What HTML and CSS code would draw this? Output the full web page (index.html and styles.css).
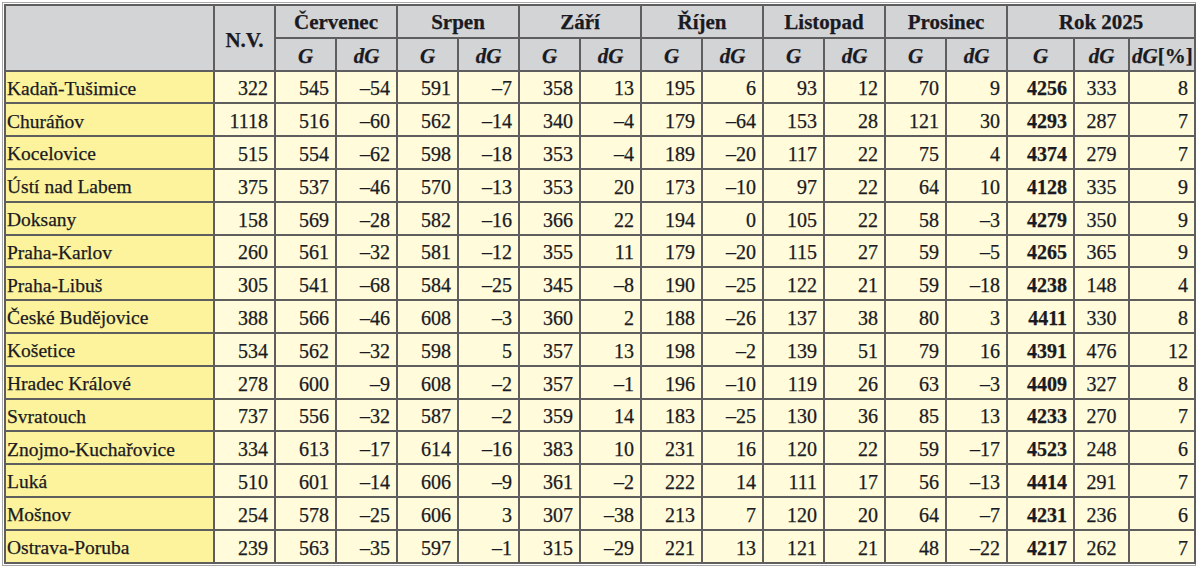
FILE: index.html
```html
<!DOCTYPE html>
<html lang="cs">
<head>
<meta charset="utf-8">
<link rel="stylesheet" href="styles.css">
</head>
<body>
<div class="frame">
<table class="tbl">
<colgroup>
<col class="c-name"><col class="c-nv">
<col class="c-m"><col class="c-m"><col class="c-m"><col class="c-m"><col class="c-m"><col class="c-m">
<col class="c-m"><col class="c-m"><col class="c-m"><col class="c-m"><col class="c-m"><col class="c-m">
<col class="c-rg"><col class="c-rdg"><col class="c-rp">
</colgroup>
<thead>
<tr>
<th rowspan="2" class="corner"></th>
<th rowspan="2" class="nv">N.V.</th>
<th colspan="2">Červenec</th>
<th colspan="2">Srpen</th>
<th colspan="2">Září</th>
<th colspan="2">Říjen</th>
<th colspan="2">Listopad</th>
<th colspan="2">Prosinec</th>
<th colspan="3">Rok 2025</th>
</tr>
<tr class="sub">
<th><i>G</i></th><th><i>dG</i></th>
<th><i>G</i></th><th><i>dG</i></th>
<th><i>G</i></th><th><i>dG</i></th>
<th><i>G</i></th><th><i>dG</i></th>
<th><i>G</i></th><th><i>dG</i></th>
<th><i>G</i></th><th><i>dG</i></th>
<th><i>G</i></th><th class="ctr"><i>dG</i></th><th class="pct"><i>dG</i>[%]</th>
</tr>
</thead>
<tbody>
<tr><td class="name">Kadaň-Tušimice</td><td>322</td><td>545</td><td>–54</td><td>591</td><td>–7</td><td>358</td><td>13</td><td>195</td><td>6</td><td>93</td><td>12</td><td>70</td><td>9</td><td class="tot">4256</td><td class="ctr">333</td><td>8</td></tr>
<tr><td class="name">Churáňov</td><td>1118</td><td>516</td><td>–60</td><td>562</td><td>–14</td><td>340</td><td>–4</td><td>179</td><td>–64</td><td>153</td><td>28</td><td>121</td><td>30</td><td class="tot">4293</td><td class="ctr">287</td><td>7</td></tr>
<tr><td class="name">Kocelovice</td><td>515</td><td>554</td><td>–62</td><td>598</td><td>–18</td><td>353</td><td>–4</td><td>189</td><td>–20</td><td>117</td><td>22</td><td>75</td><td>4</td><td class="tot">4374</td><td class="ctr">279</td><td>7</td></tr>
<tr><td class="name">Ústí nad Labem</td><td>375</td><td>537</td><td>–46</td><td>570</td><td>–13</td><td>353</td><td>20</td><td>173</td><td>–10</td><td>97</td><td>22</td><td>64</td><td>10</td><td class="tot">4128</td><td class="ctr">335</td><td>9</td></tr>
<tr><td class="name">Doksany</td><td>158</td><td>569</td><td>–28</td><td>582</td><td>–16</td><td>366</td><td>22</td><td>194</td><td>0</td><td>105</td><td>22</td><td>58</td><td>–3</td><td class="tot">4279</td><td class="ctr">350</td><td>9</td></tr>
<tr><td class="name">Praha-Karlov</td><td>260</td><td>561</td><td>–32</td><td>581</td><td>–12</td><td>355</td><td>11</td><td>179</td><td>–20</td><td>115</td><td>27</td><td>59</td><td>–5</td><td class="tot">4265</td><td class="ctr">365</td><td>9</td></tr>
<tr><td class="name">Praha-Libuš</td><td>305</td><td>541</td><td>–68</td><td>584</td><td>–25</td><td>345</td><td>–8</td><td>190</td><td>–25</td><td>122</td><td>21</td><td>59</td><td>–18</td><td class="tot">4238</td><td class="ctr">148</td><td>4</td></tr>
<tr><td class="name">České Budějovice</td><td>388</td><td>566</td><td>–46</td><td>608</td><td>–3</td><td>360</td><td>2</td><td>188</td><td>–26</td><td>137</td><td>38</td><td>80</td><td>3</td><td class="tot">4411</td><td class="ctr">330</td><td>8</td></tr>
<tr><td class="name">Košetice</td><td>534</td><td>562</td><td>–32</td><td>598</td><td>5</td><td>357</td><td>13</td><td>198</td><td>–2</td><td>139</td><td>51</td><td>79</td><td>16</td><td class="tot">4391</td><td class="ctr">476</td><td>12</td></tr>
<tr><td class="name">Hradec Králové</td><td>278</td><td>600</td><td>–9</td><td>608</td><td>–2</td><td>357</td><td>–1</td><td>196</td><td>–10</td><td>119</td><td>26</td><td>63</td><td>–3</td><td class="tot">4409</td><td class="ctr">327</td><td>8</td></tr>
<tr><td class="name">Svratouch</td><td>737</td><td>556</td><td>–32</td><td>587</td><td>–2</td><td>359</td><td>14</td><td>183</td><td>–25</td><td>130</td><td>36</td><td>85</td><td>13</td><td class="tot">4233</td><td class="ctr">270</td><td>7</td></tr>
<tr><td class="name">Znojmo-Kuchařovice</td><td>334</td><td>613</td><td>–17</td><td>614</td><td>–16</td><td>383</td><td>10</td><td>231</td><td>16</td><td>120</td><td>22</td><td>59</td><td>–17</td><td class="tot">4523</td><td class="ctr">248</td><td>6</td></tr>
<tr><td class="name">Luká</td><td>510</td><td>601</td><td>–14</td><td>606</td><td>–9</td><td>361</td><td>–2</td><td>222</td><td>14</td><td>111</td><td>17</td><td>56</td><td>–13</td><td class="tot">4414</td><td class="ctr">291</td><td>7</td></tr>
<tr><td class="name">Mošnov</td><td>254</td><td>578</td><td>–25</td><td>606</td><td>3</td><td>307</td><td>–38</td><td>213</td><td>7</td><td>120</td><td>20</td><td>64</td><td>–7</td><td class="tot">4231</td><td class="ctr">236</td><td>6</td></tr>
<tr><td class="name">Ostrava-Poruba</td><td>239</td><td>563</td><td>–35</td><td>597</td><td>–1</td><td>315</td><td>–29</td><td>221</td><td>13</td><td>121</td><td>21</td><td>48</td><td>–22</td><td class="tot">4217</td><td class="ctr">262</td><td>7</td></tr>
</tbody>
</table>
</div>
</body>
</html>
```

FILE: styles.css
```css
html, body {
  margin: 0;
  padding: 0;
  background: #ffffff;
}

.frame {
  margin: 2px 0 0 2px;
  width: 1194px;
  border: 1px solid #a8a8a8;
  padding: 1px;
  box-sizing: border-box;
}

.tbl {
  width: 1190px;
  table-layout: fixed;
  border-collapse: collapse;
  font-family: "Liberation Serif", "Times New Roman", serif;
  font-size: 20px;
  color: #1a1a22;
  border: 2px solid #5e5e5e;
}

.c-name { width: 209px; }
.c-nv { width: 61px; }
.c-m { width: 61px; }
.c-rg { width: 67px; }
.c-rdg { width: 55px; }
.c-rp { width: 66px; }

.tbl th,
.tbl td {
  border: 2px solid #5e5e5e;
  height: 32.8px;
  padding: 3px 6px 0 3px;
  box-sizing: border-box;
  line-height: 1;
  white-space: nowrap;
  overflow: hidden;
  -webkit-text-stroke: 0.25px currentColor;
}

.tbl th {
  background: #d3d4d6;
  font-weight: bold;
  text-align: center;
  font-size: 21px;
  padding: 2px 3px 0;
}

.tbl th i {
  font-style: italic;
}

.tbl .sub th {
  padding: 4px 3px 0;
}

.tbl .sub th.pct {
  padding: 4px 3px 0 2px;
  text-align: right;
}

.tbl .nv {
  padding-top: 6px;
}

.tbl td {
  background: #fffbdb;
  text-align: right;
}

.tbl td.name {
  background: #fcf39c;
  text-align: left;
  padding-left: 1px;
  font-size: 19.5px;
}

.tbl td.tot {
  font-weight: bold;
  text-align: right;
  padding-right: 6px;
}

.tbl td.ctr {
  text-align: center;
  padding-left: 2px;
  padding-right: 2px;
}
```
